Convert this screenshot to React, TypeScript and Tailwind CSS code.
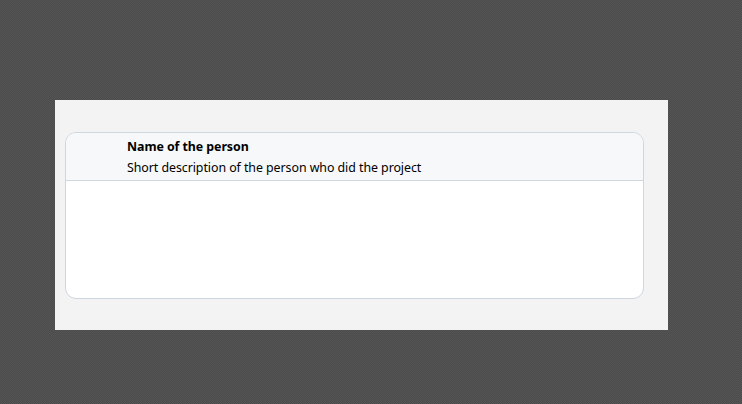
export default function App() {
  return (
    <div className="h-[404px] w-[742px] overflow-hidden bg-[#4e4e4e] bg-[conic-gradient(#4b4b4b_25%,#555555_0_50%,#4b4b4b_0_75%,#555555_0),linear-gradient(#4e4e4e,#4e4e4e)] bg-[length:2px_2px] pt-[100px] pl-[55px] font-['Noto_Sans','Open_Sans',sans-serif] text-black">
      <main className="h-[230px] w-[613px] bg-[#f3f3f3] pt-8 pl-2.5">
        <article className="h-[167px] w-[579px] overflow-hidden rounded-[11px] border border-[#ced6e0] bg-white">
          <header className="h-12 border-b border-[#ced6e0] bg-[#f6f8fa] pt-[3px] pl-[61px] whitespace-nowrap">
            <h1 className="h-[21px] text-[12.4px] leading-[21px] font-bold tracking-[-0.06px]">
              Name of the person
            </h1>
            <p className="h-[21px] text-[12.4px] leading-[21px] tracking-[-0.06px]">
              Short description of the person who did the project
            </p>
          </header>
        </article>
      </main>
    </div>
  );
}
